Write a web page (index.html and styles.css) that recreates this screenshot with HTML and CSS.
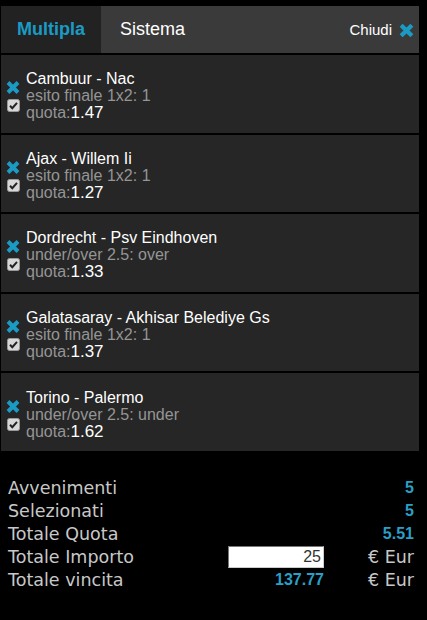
FILE: index.html
```html
<!DOCTYPE html>
<html lang="it">
<head>
  <meta charset="UTF-8">
  <title>Schedina</title>
  <link rel="stylesheet" href="styles.css">
</head>
<body>
  <div class="schedina">
    <div class="tabs">
      <div class="tab attiva">Multipla</div>
      <div class="tab">Sistema</div>
      <div class="chiudi">Chiudi
        <svg class="x-grande" viewBox="0 0 14 14"><path d="M2 2 L12 12 M12 2 L2 12" /></svg>
      </div>
    </div>

    <!-- eventi -->
    <div class="evento">
      <div class="azioni">
        <svg class="x" viewBox="0 0 14 13"><path d="M2 1.5 L12 11.5 M12 1.5 L2 11.5" /></svg>
        <svg class="check" viewBox="0 0 13 13"><rect x="0.5" y="0.5" width="12" height="12" rx="2" /><path d="M3 6.8 L5.3 9.2 L10 3.8" /></svg>
      </div>
      <div class="info">
        <div class="partita">Cambuur - Nac</div>
        <div class="esito">esito finale 1x2: 1</div>
        <div class="esito">quota:<span class="quota">1.47</span></div>
      </div>
    </div>

    <div class="evento">
      <div class="azioni">
        <svg class="x" viewBox="0 0 14 13"><path d="M2 1.5 L12 11.5 M12 1.5 L2 11.5" /></svg>
        <svg class="check" viewBox="0 0 13 13"><rect x="0.5" y="0.5" width="12" height="12" rx="2" /><path d="M3 6.8 L5.3 9.2 L10 3.8" /></svg>
      </div>
      <div class="info">
        <div class="partita">Ajax - Willem Ii</div>
        <div class="esito">esito finale 1x2: 1</div>
        <div class="esito">quota:<span class="quota">1.27</span></div>
      </div>
    </div>

    <div class="evento">
      <div class="azioni">
        <svg class="x" viewBox="0 0 14 13"><path d="M2 1.5 L12 11.5 M12 1.5 L2 11.5" /></svg>
        <svg class="check" viewBox="0 0 13 13"><rect x="0.5" y="0.5" width="12" height="12" rx="2" /><path d="M3 6.8 L5.3 9.2 L10 3.8" /></svg>
      </div>
      <div class="info">
        <div class="partita">Dordrecht - Psv Eindhoven</div>
        <div class="esito">under/over 2.5: over</div>
        <div class="esito">quota:<span class="quota">1.33</span></div>
      </div>
    </div>

    <div class="evento">
      <div class="azioni">
        <svg class="x" viewBox="0 0 14 13"><path d="M2 1.5 L12 11.5 M12 1.5 L2 11.5" /></svg>
        <svg class="check" viewBox="0 0 13 13"><rect x="0.5" y="0.5" width="12" height="12" rx="2" /><path d="M3 6.8 L5.3 9.2 L10 3.8" /></svg>
      </div>
      <div class="info">
        <div class="partita">Galatasaray - Akhisar Belediye Gs</div>
        <div class="esito">esito finale 1x2: 1</div>
        <div class="esito">quota:<span class="quota">1.37</span></div>
      </div>
    </div>

    <div class="evento">
      <div class="azioni">
        <svg class="x" viewBox="0 0 14 13"><path d="M2 1.5 L12 11.5 M12 1.5 L2 11.5" /></svg>
        <svg class="check" viewBox="0 0 13 13"><rect x="0.5" y="0.5" width="12" height="12" rx="2" /><path d="M3 6.8 L5.3 9.2 L10 3.8" /></svg>
      </div>
      <div class="info">
        <div class="partita">Torino - Palermo</div>
        <div class="esito">under/over 2.5: under</div>
        <div class="esito">quota:<span class="quota">1.62</span></div>
      </div>
    </div>
  </div>

  <!-- riepilogo -->
  <div class="riepilogo">
    <div class="voce">Avvenimenti</div><div></div><div class="valore">5</div>
    <div class="voce">Selezionati</div><div></div><div class="valore">5</div>
    <div class="voce">Totale Quota</div><div></div><div class="valore">5.51</div>
    <div class="voce">Totale Importo</div><input class="importo" type="text" value="25"><div class="valuta">€ Eur</div>
    <div class="voce">Totale vincita</div><div class="valore">137.77</div><div class="valuta">€ Eur</div>
  </div>
</body>
</html>
```

FILE: styles.css
```css
body {
  margin: 0;
  background-color: #000;
  font-family: "Liberation Sans", Arial, sans-serif;
}

.schedina {
  margin: 6px 8px 0 1px;
  display: flex;
  flex-direction: column;
  gap: 2px;
}

.tabs {
  display: flex;
  align-items: center;
  height: 47px;
  background-color: #3a3a3a;
}

.tab {
  height: 100%;
  display: flex;
  align-items: center;
  padding: 0 19px;
  font-size: 18px;
  color: #fff;
}

.tab.attiva {
  width: 100px;
  box-sizing: border-box;
  justify-content: center;
  padding: 0;
  background-color: #222;
  color: #1b9bc4;
  font-weight: bold;
}

.chiudi {
  margin-left: auto;
  display: flex;
  align-items: center;
  gap: 7px;
  padding-right: 5px;
  font-size: 15px;
  color: #fff;
}

.x-grande {
  width: 15px;
  height: 15px;
  margin-top: 2px;
}

.x-grande path,
.x path {
  stroke: #1b9bc4;
  stroke-width: 4;
  fill: none;
}

.evento {
  height: 77.6px;
  display: flex;
  align-items: center;
  background-color: #262626;
}

.azioni {
  width: 24px;
  display: flex;
  flex-direction: column;
  align-items: center;
  gap: 5px;
  margin-top: 6px;
}

.x {
  width: 14px;
  height: 13px;
}

.check {
  width: 13px;
  height: 13px;
}

.check rect {
  fill: #d8d8d8;
  stroke: #9a9a9a;
}

.check path {
  stroke: #222;
  stroke-width: 2;
  fill: none;
}

.info {
  font-size: 16px;
  line-height: 17px;
  padding: 4px 0 0 1px;
}

.partita {
  color: #fff;
}

.esito {
  color: #959595;
}

.quota {
  color: #fff;
  font-size: 17px;
}

.riepilogo {
  margin: 26px 13px 0 8px;
  display: grid;
  grid-template-columns: 1fr 96px 90px;
  grid-auto-rows: 23px;
  align-items: center;
  font-family: "DejaVu Sans", Verdana, sans-serif;
  font-size: 17.5px;
  color: #c8c8c8;
}

.valore {
  text-align: right;
  color: #2a9fc7;
  font-family: "Liberation Sans", Arial, sans-serif;
  font-size: 16px;
  font-weight: bold;
}

.valuta {
  text-align: right;
}

.importo {
  box-sizing: border-box;
  width: 96px;
  height: 22px;
  padding: 0 2px 0 0;
  border: 1px solid;
  border-color: #777 #ccc #ccc #777;
  background-color: #fff;
  color: #333;
  text-align: right;
  font-family: "Liberation Sans", Arial, sans-serif;
  font-size: 16px;
}
```
